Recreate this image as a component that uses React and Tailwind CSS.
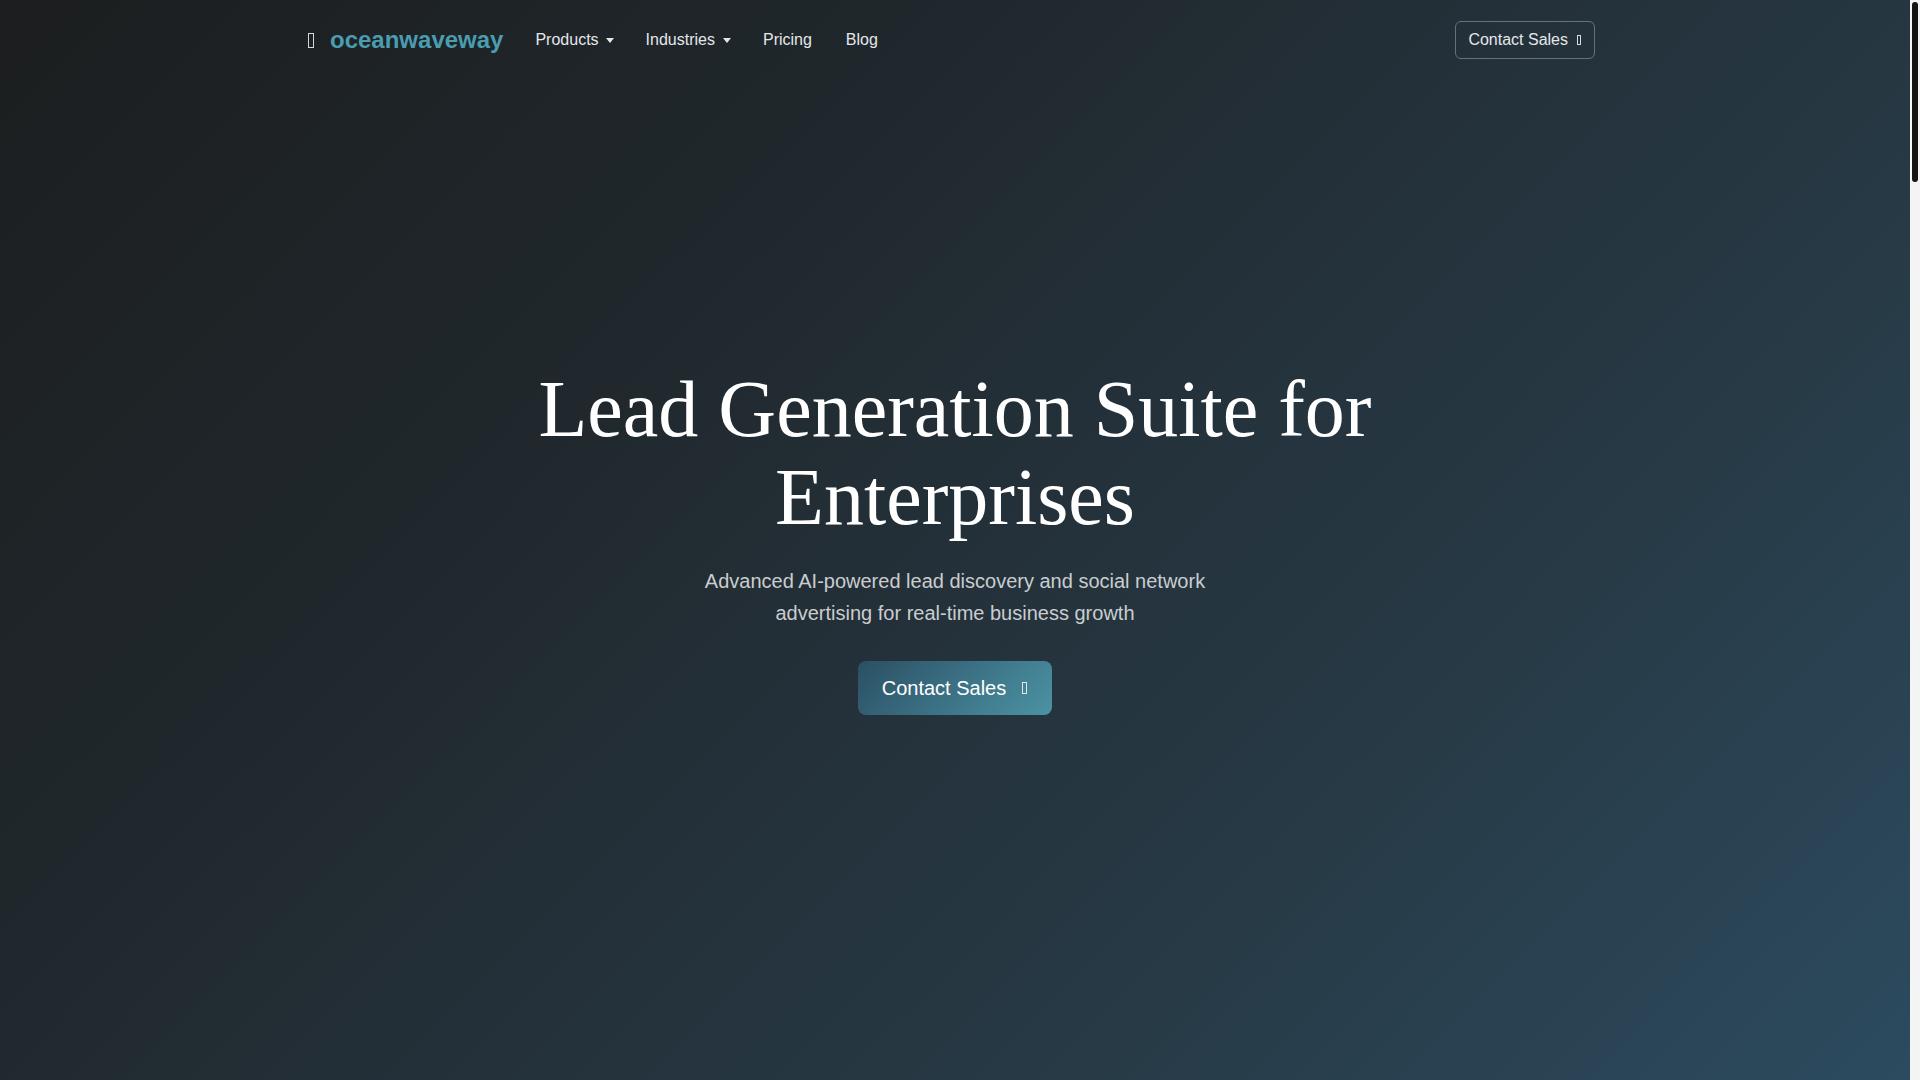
export default function App() {
  const Tofu = ({ className }) => (
    <span className={`inline-block shrink-0 border-current ${className}`} aria-hidden="true" />
  );

  return (
    <div className="flex h-screen w-full overflow-hidden font-['Liberation_Sans',Arial,sans-serif]">
      <section className="relative flex h-full min-w-0 flex-1 flex-col items-center justify-center bg-[linear-gradient(135deg,#1c1e1f_0%,#20282d_33%,#24313a_52%,#273a46_72%,#2c4b5f_100%)] text-center">
        <nav className="absolute inset-x-0 top-0 h-20">
          <div className="mx-auto flex h-full w-[1320px] items-center justify-between px-3">
            <div className="flex items-center">
              <a href="#" className="mr-4 flex items-center text-2xl font-bold leading-8 text-[#4a9db0]">
                <Tofu className="ml-px h-[15px] w-[6px] border-[1.5px] text-[#d6d8da]" />
                <span className="ml-[16px]">oceanwaveway</span>
              </a>
              <ul className="flex items-center text-base leading-6 text-[#e4e7ea]">
                <li>
                  <a href="#" className="flex items-center px-4 py-2">
                    Products
                    <span className="ml-[7px] inline-block h-0 w-0 border-x-4 border-t-[5px] border-x-transparent border-t-current" />
                  </a>
                </li>
                <li>
                  <a href="#" className="flex items-center px-4 py-2">
                    Industries
                    <span className="ml-2 inline-block h-0 w-0 border-x-4 border-t-[5px] border-x-transparent border-t-current" />
                  </a>
                </li>
                <li>
                  <a href="#" className="block px-4 py-2">Pricing</a>
                </li>
                <li>
                  <a href="#" className="block py-2 pl-[18px] pr-4">Blog</a>
                </li>
              </ul>
            </div>
            <a
              href="#"
              className="mr-2 flex h-[38px] items-center rounded-md border border-[#66727b] pl-3 pr-[13px] text-base leading-6 text-[#e4e7ea]"
            >
              Contact Sales
              <Tofu className="ml-[9px] h-[10px] w-[4px] border text-[#d6d8da]" />
            </a>
          </div>
        </nav>

        <h1 className="mb-6 max-w-[900px] font-['Liberation_Serif','Times_New_Roman',serif] text-[80px] font-normal leading-[88px] text-white">
          Lead Generation Suite for Enterprises
        </h1>
        <p className="mb-8 max-w-[560px] text-xl leading-8 text-[#c9cdd0]">
          Advanced AI-powered lead discovery and social network advertising for real-time business growth
        </p>
        <a
          href="#"
          className="inline-flex h-[54px] items-center rounded-lg bg-[linear-gradient(135deg,#2b4f63_0%,#3c7185_50%,#4b93a3_100%)] pl-6 pr-[25px] text-xl leading-[30px] text-white"
        >
          Contact Sales
          <Tofu className="ml-4 h-[12px] w-[5px] border-[1.5px] text-[#e2e5e8]" />
        </a>
      </section>
      <div className="flex h-full w-[10px] shrink-0 justify-center bg-[#f4f4f4] pt-[2px]">
        <div className="h-[180px] w-[6px] rounded-full bg-[#141414]" />
      </div>
    </div>
  );
}
